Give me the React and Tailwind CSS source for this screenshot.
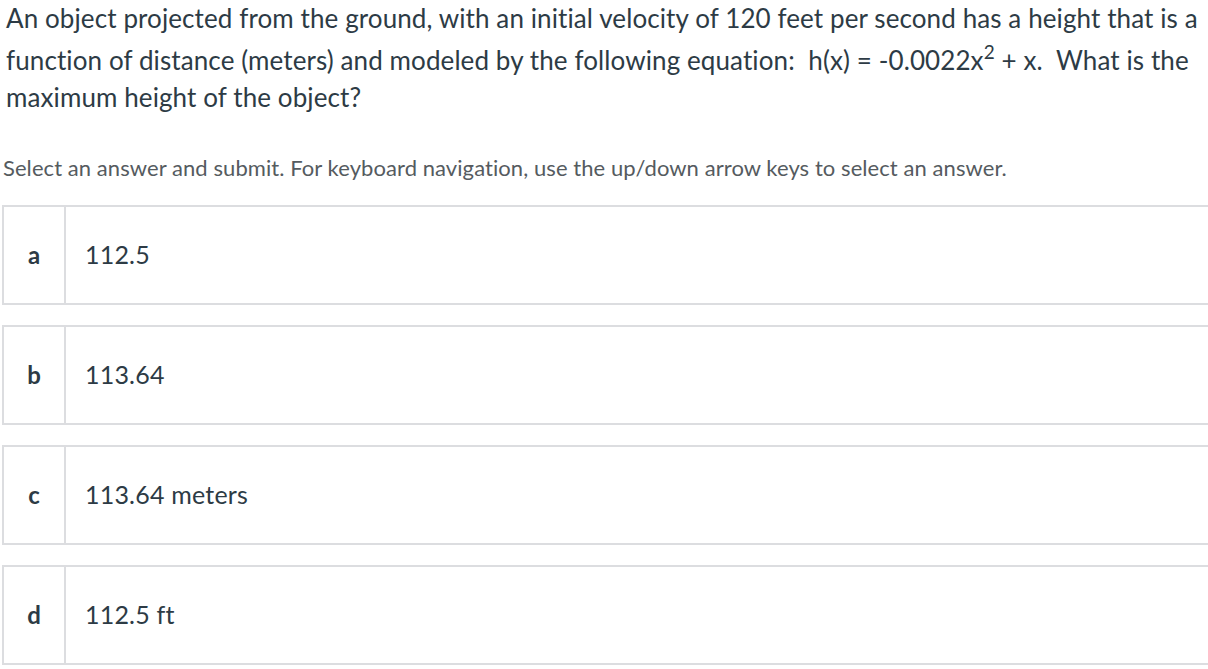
const answers = [
  { letter: "a", text: "112.5" },
  { letter: "b", text: "113.64" },
  { letter: "c", text: "113.64 meters" },
  { letter: "d", text: "112.5 ft" },
];

export default function App() {
  return (
    <div
      className="min-h-screen bg-white text-[#2d3b45] overflow-hidden"
      style={{ fontFamily: "Lato, 'Open Sans', sans-serif" }}
    >
      <div className="pl-[6px] text-[26px] leading-[36px] tracking-[0.1px] whitespace-nowrap">
        <div className="h-[42px]">
          An object projected from the ground, with an initial velocity of 120 feet per second has a height that is a
        </div>
        <div className="h-[37px]">
          function of distance (meters) and modeled by the following equation:&nbsp; h(x) = -0.0022x
          <sup className="text-[19px] -top-[11px]">2</sup> + x.&nbsp; What is the
        </div>
        <div className="h-[37px]">maximum height of the object?</div>
      </div>

      <p className="mt-[38px] pl-[3px] text-[22px] leading-[28px] tracking-[0.07px] text-[#555b60] whitespace-nowrap">
        Select an answer and submit. For keyboard navigation, use the up/down arrow keys to select an answer.
      </p>

      <div className="mt-[23px] ml-[2px] flex flex-col gap-5 w-[1220px]">
        {answers.map((a) => (
          <div
            key={a.letter}
            className="flex h-[100px] border-2 border-[#dcdde0] bg-white"
          >
            <div className="w-[62px] flex items-center justify-center border-r-2 border-[#dcdde0] text-[24px] font-bold">
              {a.letter}
            </div>
            <div className="flex items-center pl-[19px] text-[25px] tracking-[0.2px]">{a.text}</div>
          </div>
        ))}
      </div>
    </div>
  );
}
